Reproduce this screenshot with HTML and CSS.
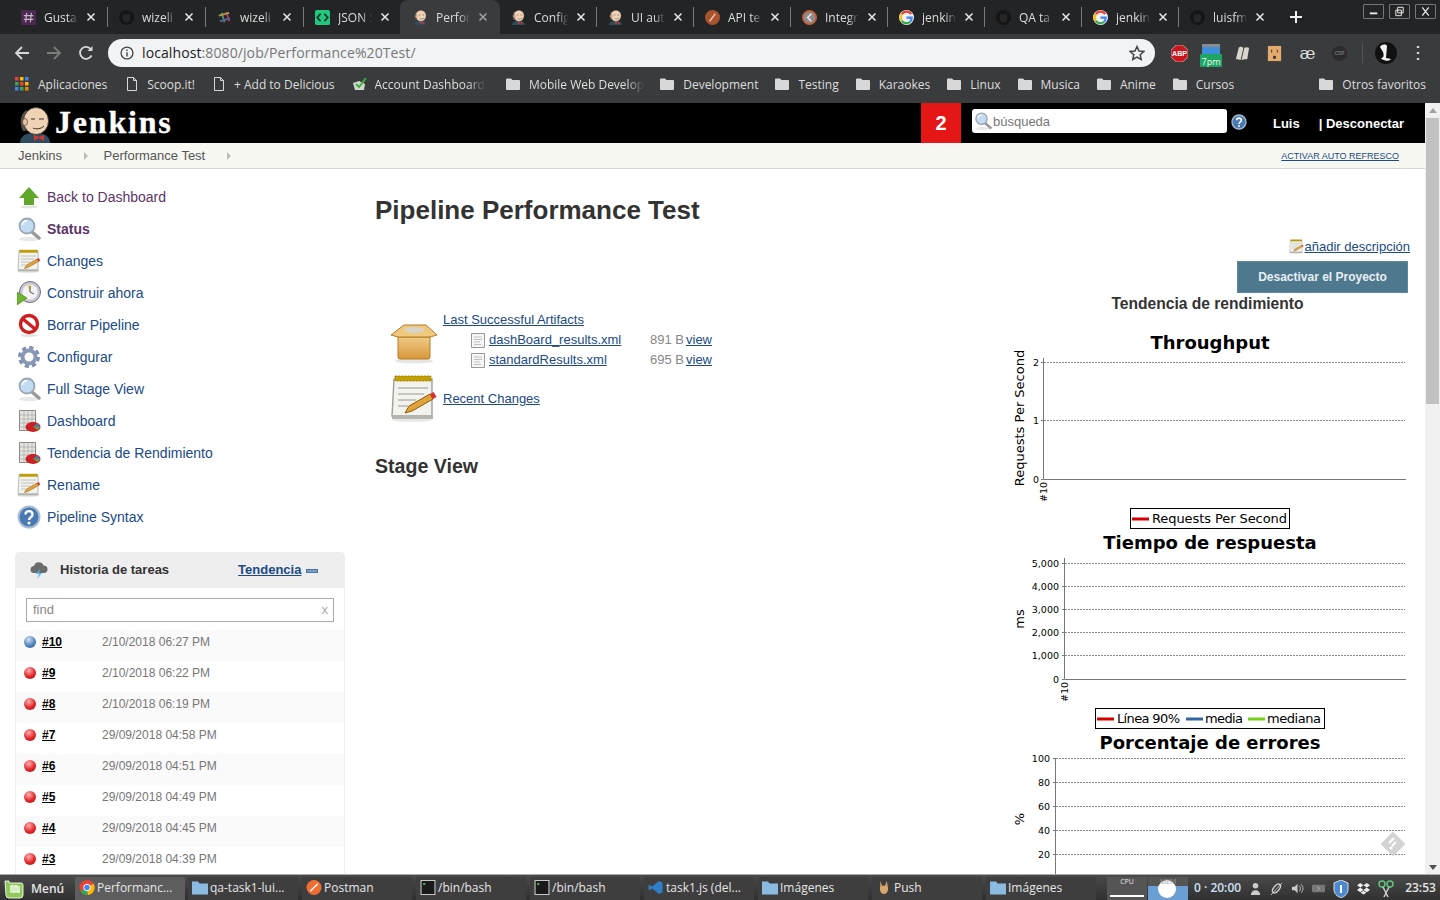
FILE: index.html
```html
<!DOCTYPE html>
<html lang="en">
<head>
<meta charset="UTF-8">
<meta name="viewport" content="width=device-width, initial-scale=1.0">
<title>Performance Test [Jenkins]</title>
<link rel="stylesheet" href="styles.css">
</head>
<body>

<svg class="defs" width="0" height="0">
    <defs>
        <linearGradient id="g-box" x1="0" y1="0" x2="0" y2="1">
            <stop offset="0" stop-color="#efcb86"/>
            <stop offset="1" stop-color="#d9963a"/>
        </linearGradient>
        <symbol id="i-jenkins" viewBox="0 0 32 36">
            <path d="M1 36c0-6 4-10 15-10s15 4 15 10z" fill="#2f4b5f"/>
            <path d="M4 24C0 16 1 6 8 3l3 20z" fill="#55524e"/>
            <ellipse cx="17" cy="14" rx="12.500" ry="13.500" fill="#f0d3b4" stroke="#3a2f2a" stroke-width=".8"/>
            <ellipse cx="6" cy="15" rx="2.500" ry="3.500" fill="#e8c4a2" stroke="#3a2f2a" stroke-width=".6"/>
            <path d="M12 12h4M20 12h5M14 21c3 1.500 8 1 11-2" stroke="#3a2f2a" fill="none"/>
            <path d="M15 28l5 2 5-2v6l-5-3-5 3z" fill="#d33833"/>
        </symbol>
        <symbol id="i-github" viewBox="0 0 16 16">
            <circle cx="8" cy="8" r="8" fill="#151515"/>
            <path d="M5 13V11C3 10 4 5 5 4c1 0 2 1 3 1s2-1 3-1c1 1 2 6 0 7v2z" fill="#262626"/>
        </symbol>
        <symbol id="i-google" viewBox="0 0 16 16">
            <circle cx="8" cy="8" r="8" fill="#f1f1f1"/>
            <path d="M13 4.500A6 6 0 0 0 3 4.500" stroke="#ea4335" stroke-width="2.400" fill="none"/>
            <path d="M3 4.500a6 6 0 0 0 0 7" stroke="#fbbc05" stroke-width="2.400" fill="none"/>
            <path d="M3 11.500a6 6 0 0 0 9 1" stroke="#34a853" stroke-width="2.400" fill="none"/>
            <path d="M8 8h5.500a6 6 0 0 1-1.500 4.500" stroke="#4285f4" stroke-width="2.400" fill="none"/>
        </symbol>
        <symbol id="i-folder" viewBox="0 0 14 12">
            <path d="M0 1.500A1 1 0 0 1 1 .5h4l1.500 1.500H13a1 1 0 0 1 1 1V11a1 1 0 0 1-1 1H1a1 1 0 0 1-1-1z" fill="#d8d8d8"/>
        </symbol>
        <symbol id="i-doc" viewBox="0 0 10 14">
            <path d="M.5.5h6l3 3v10h-9z M6.500.5v3h3" fill="none" stroke="#d8d8d8"/>
        </symbol>
        <symbol id="i-close" viewBox="0 0 10 10">
            <path d="M1.500 1.500l7 7M8.500 1.500l-7 7" stroke="#e8e8e8" stroke-width="1.500"/>
        </symbol>
        <symbol id="i-magnifier" viewBox="0 0 24 24">
            <ellipse cx="12" cy="22" rx="10" ry="2" fill="#e8e8e8"/>
            <path d="M15 15l7 6" stroke="#9a9a9a" stroke-width="3.500" stroke-linecap="round"/>
            <circle cx="10" cy="9" r="7.500" fill="#c4dcf2" stroke="#9aa6b2" stroke-width="1.800"/>
            <path d="M5 8a5 5 0 0 1 5-4" stroke="#fff" stroke-width="1.500" fill="none"/>
        </symbol>
        <symbol id="i-notepad" viewBox="0 0 24 24">
            <ellipse cx="11" cy="23" rx="10" ry="1" fill="#e8e8e8"/>
            <path d="M2 2.500h19v18.500H1z" fill="#f2f2ee" stroke="#a0a09a" stroke-width=".7"/>
            <path d="M2.500 1h18v2.500h-18z" fill="#c4a000" stroke="#8f7500" stroke-width=".4" stroke-dasharray="1 .6"/>
            <path d="M1 20.500h20.500V22.500H1z" fill="#b4b4b0"/>
            <path d="M4 7h15M4 10h13M4 13h9M4 16h5" stroke="#b8b8b2" stroke-width=".8"/>
            <path d="M7.500 19.500l2-3.500 10.500-6 1.500 2.500-10.500 6z" fill="#e2a33f" stroke="#8f5902" stroke-width=".5"/>
            <path d="M20 10l1.500 2.500 1.800-1-1.500-2.500z" fill="#d9342b"/>
        </symbol>
        <symbol id="i-build" viewBox="0 0 24 24">
            <circle cx="13" cy="11" r="10.500" fill="#c8c8d4" stroke="#6f6f80"/>
            <circle cx="13" cy="11" r="7.500" fill="#f4f4f4"/>
            <path d="M13 11L9 4 15 4z" fill="#eadb9a"/>
            <path d="M13 5v6l4 2" stroke="#555" fill="none"/>
            <path d="M0 11l10 6-10 7z" fill="#6cb72c" stroke="#3f7f10" stroke-width=".6"/>
        </symbol>
        <symbol id="i-delete" viewBox="0 0 24 24">
            <ellipse cx="12" cy="22.500" rx="9" ry="1.500" fill="#e2e2e2"/>
            <circle cx="12" cy="11" r="8.500" fill="#fff" stroke="#cc1f1f" stroke-width="3.400"/>
            <path d="M6 6l12 10" stroke="#cc1f1f" stroke-width="3.400"/>
        </symbol>
        <symbol id="i-gear" viewBox="0 0 24 24">
            <circle cx="12" cy="12" r="9" fill="none" stroke="#7f8fb0" stroke-width="4" stroke-dasharray="4 3.070"/>
            <circle cx="12" cy="12" r="6.500" fill="none" stroke="#8a98b8" stroke-width="4"/>
            <circle cx="12" cy="12" r="3.500" fill="#fff"/>
        </symbol>
        <symbol id="i-dash" viewBox="0 0 24 24">
            <path d="M2.500 1.500h16v20h-16z" fill="#e4e4e0" stroke="#8a8a86"/>
            <path d="M3 6h15M3 10h15M3 14h15M3 18h15M7 2v19M11 2v19M15 2v19" stroke="#a8a8a4" stroke-width=".7"/>
            <ellipse cx="16" cy="18" rx="7.500" ry="5" fill="#cc1f1f"/>
            <path d="M16 18l4-4 3 4z" fill="#4a7db0"/>
            <path d="M16 18h7l-2 3z" fill="#6aa53a"/>
        </symbol>
        <symbol id="i-help" viewBox="0 0 24 24">
            <circle cx="12" cy="12" r="10.500" fill="#4a79b2" stroke="#a9bdd6" stroke-width="2"/>
            <path d="M8.500 9.500C8.500 5 15.500 5 15.500 9.500c0 3-3.500 2.500-3.500 5.500" fill="none" stroke="#fff" stroke-width="2.400"/>
            <circle cx="12" cy="18" r="1.500" fill="#fff"/>
        </symbol>
        <symbol id="i-file" viewBox="0 0 14 15">
            <path d="M.5.5h13v14H.5z" fill="#f6f6f6" stroke="#999"/>
            <path d="M3 4h8M3 6.500h8M3 9h6M3 11.500h7" stroke="#c0c0c0"/>
        </symbol>
        <symbol id="i-term" viewBox="0 0 14 14">
            <path d="M.5.5h13v13H.5z" fill="#1a1a1a" stroke="#c8c8c8"/>
            <path d="M2.500 3h2v1.500h-2z" fill="#5fd35f"/>
        </symbol>
        <symbol id="i-bluefolder" viewBox="0 0 16 14">
            <path d="M0 1h6l1.500 2H16v11H0z" fill="#8cbbe2"/>
        </symbol>
    </defs>
</svg>

<div class="tabstrip">
    <div class="tab tab-sep">
        <svg class="tab-icon" viewBox="0 0 16 16"><rect width="16" height="16" fill="#4a2a4e"/><path d="M6 3L5 13M11 3l-1 10M3 6h10M3 10h10" stroke="#c9b9cc" stroke-width="1.200"/></svg>
        <span class="tab-title">Gusta</span>
        <svg class="tab-close"><use href="#i-close"/></svg>
    </div>
    <div class="tab tab-sep">
        <svg class="tab-icon"><use href="#i-github"/></svg>
        <span class="tab-title">wizeli</span>
        <svg class="tab-close"><use href="#i-close"/></svg>
    </div>
    <div class="tab tab-sep">
        <svg class="tab-icon" viewBox="0 0 16 16"><path d="M5 3l3 10" stroke="#3f9a6e" stroke-width="2"/><path d="M10 2l3 10" stroke="#b8336a" stroke-width="2"/><path d="M2 6l11-3" stroke="#b8963a" stroke-width="2"/><path d="M3 12l11-3" stroke="#5a5f8a" stroke-width="2"/></svg>
        <span class="tab-title">wizeli</span>
        <svg class="tab-close"><use href="#i-close"/></svg>
    </div>
    <div class="tab">
        <svg class="tab-icon" viewBox="0 0 16 16"><rect width="16" height="16" rx="2" fill="#1fc77f"/><path d="M6 4L2.500 8 6 12M10 4l3.500 4-3.500 4" fill="none" stroke="#12352a" stroke-width="2"/></svg>
        <span class="tab-title">JSON S</span>
        <svg class="tab-close"><use href="#i-close"/></svg>
    </div>
    <div class="tab tab-active">
        <svg class="tab-icon"><use href="#i-jenkins"/></svg>
        <span class="tab-title">Perfor</span>
        <svg class="tab-close"><use href="#i-close"/></svg>
    </div>
    <div class="tab tab-sep">
        <svg class="tab-icon"><use href="#i-jenkins"/></svg>
        <span class="tab-title">Config</span>
        <svg class="tab-close"><use href="#i-close"/></svg>
    </div>
    <div class="tab tab-sep">
        <svg class="tab-icon"><use href="#i-jenkins"/></svg>
        <span class="tab-title">UI aut</span>
        <svg class="tab-close"><use href="#i-close"/></svg>
    </div>
    <div class="tab tab-sep">
        <svg class="tab-icon" viewBox="0 0 16 16"><circle cx="8" cy="8" r="8" fill="#a8532c"/><path d="M5 12l6-8" stroke="#e6c9b8" stroke-width="1.500"/></svg>
        <span class="tab-title">API te</span>
        <svg class="tab-close"><use href="#i-close"/></svg>
    </div>
    <div class="tab tab-sep">
        <svg class="tab-icon" viewBox="0 0 16 16"><circle cx="8" cy="8" r="7" fill="#8d8d8d" stroke="#c2603a" stroke-width="2"/><path d="M10 4L6 8l4 4" fill="none" stroke="#eee" stroke-width="1.500"/></svg>
        <span class="tab-title">Integr</span>
        <svg class="tab-close"><use href="#i-close"/></svg>
    </div>
    <div class="tab tab-sep">
        <svg class="tab-icon"><use href="#i-google"/></svg>
        <span class="tab-title">jenkin</span>
        <svg class="tab-close"><use href="#i-close"/></svg>
    </div>
    <div class="tab tab-sep">
        <svg class="tab-icon"><use href="#i-github"/></svg>
        <span class="tab-title">QA ta</span>
        <svg class="tab-close"><use href="#i-close"/></svg>
    </div>
    <div class="tab tab-sep">
        <svg class="tab-icon"><use href="#i-google"/></svg>
        <span class="tab-title">jenkin</span>
        <svg class="tab-close"><use href="#i-close"/></svg>
    </div>
    <div class="tab">
        <svg class="tab-icon"><use href="#i-github"/></svg>
        <span class="tab-title">luisfm</span>
        <svg class="tab-close"><use href="#i-close"/></svg>
    </div>
    <svg class="new-tab" viewBox="0 0 12 12"><path d="M6 0v12M0 6h12" stroke="#f0f0f0" stroke-width="2"/></svg>
    <div class="window-controls">
        <span class="win-btn"><svg viewBox="0 0 20 14"><path d="M6 9h8" stroke="#eee" stroke-width="2"/></svg></span>
        <span class="win-btn"><svg viewBox="0 0 20 14"><path d="M8 2.500h6v6h-6zM6 5.500h6v6H6z" fill="#2a2a2a" stroke="#eee"/></svg></span>
        <span class="win-btn"><svg viewBox="0 0 20 14"><path d="M6.500 2.500l7 9M13.500 2.500l-7 9" stroke="#eee" stroke-width="1.300"/></svg></span>
    </div>
</div>

<div class="toolbar">
    <svg class="nav-icon" viewBox="0 0 16 16"><path d="M15 8H2M8 2L2 8l6 6" fill="none" stroke="#d8d8d8" stroke-width="1.800"/></svg>
    <svg class="nav-icon" viewBox="0 0 16 16"><path d="M1 8h13M8 2l6 6-6 6" fill="none" stroke="#7b7b7b" stroke-width="1.800"/></svg>
    <svg class="nav-icon" viewBox="0 0 16 16"><path d="M13.500 10.500A6 6 0 1 1 13 4.500" fill="none" stroke="#d8d8d8" stroke-width="1.800"/><path d="M14.500 1v5h-5z" fill="#d8d8d8"/></svg>
    <div class="omnibox">
        <svg class="omni-info" viewBox="0 0 16 16"><circle cx="8" cy="8" r="6.800" fill="none" stroke="#444" stroke-width="1.500"/><path d="M8 7v5M8 4v1.800" stroke="#444" stroke-width="1.600"/></svg>
        <span class="omni-url">localhost<span class="omni-path">:8080/job/Performance%20Test/</span></span>
        <svg class="omni-star" viewBox="0 0 16 16"><path d="M8 1.500l2 4.500 4.800.5-3.600 3.200 1 4.800L8 12.100 3.800 14.500l1-4.800L1.200 6.500 6 6z" fill="none" stroke="#444" stroke-width="1.500"/></svg>
    </div>
    <div class="extensions">
        <svg class="ext-icon" viewBox="0 0 18 18"><path d="M5.500 0h7L18 5.500v7L12.500 18h-7L0 12.500v-7z" fill="#c9161d" stroke="#eee" stroke-width=".6"/><text x="9" y="11.500" class="ext-abp" text-anchor="middle">ABP</text></svg>
        <svg class="ext-cal" viewBox="0 0 22 24"><rect x="2" y="1" width="18" height="10" fill="#3f8edc"/><rect x="2" y="1" width="18" height="3" fill="#8a8a8a"/><rect y="11" width="22" height="13" rx="1" fill="#1fa463"/><text x="11" y="21.500" class="ext-seven" text-anchor="middle">7pm</text></svg>
        <svg class="ext-icon ext-book" viewBox="0 0 18 18"><path d="M2 15L5 3c2-2 3-1 5 0L7 16c-2-1-3-1-5-1zM8 16l3-13c2-1 3-1 5 0l-2 12c-2 0-4 0-6 1z" fill="#d9d7cd"/></svg>
        <svg class="ext-icon ext-outlet" viewBox="0 0 18 18"><rect x="2" y="1" width="14" height="16" fill="#e5ab6e"/><path d="M6 5v3M12 5v3M8 12h2v2H8z" stroke="#333" fill="#333"/></svg>
        <span class="ext-text">æ</span>
        <svg class="ext-icon ext-csp-icon" viewBox="0 0 18 18"><circle cx="9" cy="9" r="8" fill="#2b2b2b"/><text x="9" y="11" class="ext-csp" text-anchor="middle">CSP</text></svg>
        <span class="ext-sep"></span>
        <svg class="ext-avatar" viewBox="0 0 22 22"><circle cx="11" cy="11" r="11" fill="#111"/><path d="M5 5c2-3 6-3 7-1l-1 12 5 1c-2 3-8 2-10-1 3 0 3-3 2-6z" fill="#f4f4f4"/></svg>
        <svg class="ext-menu" viewBox="0 0 4 16"><path d="M2 1v2M2 7v2M2 13v2" stroke="#d8d8d8" stroke-width="2.400"/></svg>
    </div>
</div>

<div class="bookmarks">
    <span class="bm bm-apps">
        <svg class="bm-grid" viewBox="0 0 14 14"><path d="M0 0h3.500v3.500H0z" fill="#ea4335"/><path d="M5 0h3.500v3.500H5z" fill="#fbbc05"/><path d="M10 0h3.500v3.500H10z" fill="#4285f4"/><path d="M0 5h3.500v3.500H0z" fill="#34a853"/><path d="M5 5h3.500v3.500H5z" fill="#ea4335"/><path d="M10 5h3.500v3.500H10z" fill="#fbbc05"/><path d="M0 10h3.500v3.500H0z" fill="#4285f4"/><path d="M5 10h3.500v3.500H5z" fill="#34a853"/><path d="M10 10h3.500v3.500H10z" fill="#ea8600"/></svg>
        Aplicaciones
    </span>
    <span class="bm"><svg class="bm-doc"><use href="#i-doc"/></svg>Scoop.it!</span>
    <span class="bm bm-delicious"><svg class="bm-doc"><use href="#i-doc"/></svg>+ Add to Delicious</span>
    <span class="bm"><svg class="bm-check" viewBox="0 0 15 14"><path d="M1 6l6-2 6 3-1 6H3z" fill="#cfd8cf"/><path d="M4 7l3 3 7-9" fill="none" stroke="#3fae3f" stroke-width="2"/></svg><span class="bm-fade bm-account">Account Dashboard</span></span>
    <span class="bm"><svg class="bm-folder"><use href="#i-folder"/></svg><span class="bm-fade bm-mobile">Mobile Web Develop</span></span>
    <span class="bm"><svg class="bm-folder"><use href="#i-folder"/></svg>Development</span>
    <span class="bm"><svg class="bm-folder"><use href="#i-folder"/></svg>Testing</span>
    <span class="bm"><svg class="bm-folder"><use href="#i-folder"/></svg>Karaokes</span>
    <span class="bm"><svg class="bm-folder"><use href="#i-folder"/></svg>Linux</span>
    <span class="bm"><svg class="bm-folder"><use href="#i-folder"/></svg>Musica</span>
    <span class="bm"><svg class="bm-folder"><use href="#i-folder"/></svg>Anime</span>
    <span class="bm"><svg class="bm-folder"><use href="#i-folder"/></svg>Cursos</span>
    <span class="bm bm-other"><svg class="bm-folder"><use href="#i-folder"/></svg>Otros favoritos</span>
</div>

<div class="viewport">
    <div class="page">
        <header class="jenkins-header">
            <svg class="logo-head"><use href="#i-jenkins"/></svg>
            <span class="logo-text">Jenkins</span>
            <span class="notif">2</span>
            <div class="search-box">
                <svg class="search-icon"><use href="#i-magnifier"/></svg>
                <span>búsqueda</span>
            </div>
            <svg class="search-help"><use href="#i-help"/></svg>
            <a class="user-link">Luis</a>
            <a class="logout-link">| Desconectar</a>
        </header>

        <div class="breadcrumbs">
            <span class="crumb">Jenkins</span>
            <span class="crumb-arrow"></span>
            <span class="crumb">Performance Test</span>
            <span class="crumb-arrow"></span>
            <a class="auto-refresh">ACTIVAR AUTO REFRESCO</a>
        </div>

        <div class="content">
            <aside class="sidebar">
                <ul class="tasks">
                    <li class="visited"><svg viewBox="0 0 24 24"><path d="M12 2L2 13h5v7h10v-7h5z" fill="#5fa82a"/><ellipse cx="12" cy="22" rx="9" ry="1.500" fill="#e4e4e4"/></svg>Back to Dashboard</li>
                    <li class="visited current"><svg><use href="#i-magnifier"/></svg>Status</li>
                    <li><svg><use href="#i-notepad"/></svg>Changes</li>
                    <li><svg><use href="#i-build"/></svg>Construir ahora</li>
                    <li><svg><use href="#i-delete"/></svg>Borrar Pipeline</li>
                    <li><svg><use href="#i-gear"/></svg>Configurar</li>
                    <li><svg><use href="#i-magnifier"/></svg>Full Stage View</li>
                    <li><svg><use href="#i-dash"/></svg>Dashboard</li>
                    <li><svg><use href="#i-dash"/></svg>Tendencia de Rendimiento</li>
                    <li><svg><use href="#i-notepad"/></svg>Rename</li>
                    <li><svg><use href="#i-help"/></svg>Pipeline Syntax</li>
                </ul>

                <div class="history">
                    <div class="history-head">
                        <svg class="history-cloud" viewBox="0 0 18 18"><path d="M4 12a3.500 3.500 0 0 1 0-7 5 5 0 0 1 9.500-.5A3.500 3.500 0 0 1 14 12z" fill="#6b6b6b"/><path d="M10 8l-4 5h3l-2 5 5-6H9z" fill="#53b9ee"/></svg>
                        <span class="history-title">Historia de tareas</span>
                        <a class="history-trend">Tendencia</a>
                        <span class="history-dash"></span>
                    </div>
                    <div class="history-find">
                        <div class="find-input"><span>find</span><span class="find-x">x</span></div>
                    </div>
                    <div class="build-row"><span class="ball ball-blue"></span><a>#10</a><span class="build-date">2/10/2018 06:27 PM</span></div>
                    <div class="build-row"><span class="ball"></span><a>#9</a><span class="build-date">2/10/2018 06:22 PM</span></div>
                    <div class="build-row"><span class="ball"></span><a>#8</a><span class="build-date">2/10/2018 06:19 PM</span></div>
                    <div class="build-row"><span class="ball"></span><a>#7</a><span class="build-date">29/09/2018 04:58 PM</span></div>
                    <div class="build-row"><span class="ball"></span><a>#6</a><span class="build-date">29/09/2018 04:51 PM</span></div>
                    <div class="build-row"><span class="ball"></span><a>#5</a><span class="build-date">29/09/2018 04:49 PM</span></div>
                    <div class="build-row"><span class="ball"></span><a>#4</a><span class="build-date">29/09/2018 04:45 PM</span></div>
                    <div class="build-row"><span class="ball"></span><a>#3</a><span class="build-date">29/09/2018 04:39 PM</span></div>
                </div>
            </aside>

            <main class="job-main">
                <h1>Pipeline Performance Test</h1>
                <div class="summary">
                    <svg class="summary-icon" viewBox="0 0 48 48">
                        <ellipse cx="24" cy="44" rx="19" ry="2.500" fill="#e6e6e6"/>
                        <path d="M8 20h32v20a2 2 0 0 1-2 2H10a2 2 0 0 1-2-2z" fill="url(#g-box)" stroke="#b47a22"/>
                        <path d="M8 20L1 18 14 8h22l11 10-7 2z" fill="#f0c980" stroke="#b47a22"/>
                        <ellipse cx="24" cy="13" rx="10" ry="3" fill="#d8d4c8"/>
                    </svg>
                    <div class="artifacts">
                        <a class="link">Last Successful Artifacts</a>
                        <div class="artifact"><svg><use href="#i-file"/></svg><a class="link artifact-name">dashBoard_results.xml</a><span class="artifact-size">891 B</span><a class="link">view</a></div>
                        <div class="artifact"><svg><use href="#i-file"/></svg><a class="link artifact-name">standardResults.xml</a><span class="artifact-size">695 B</span><a class="link">view</a></div>
                    </div>
                </div>
                <div class="summary summary-changes">
                    <svg class="summary-icon"><use href="#i-notepad"/></svg>
                    <a class="link">Recent Changes</a>
                </div>
                <h2>Stage View</h2>
            </main>

            <section class="trend">
                <a class="add-desc"><svg><use href="#i-notepad"/></svg><span class="link">añadir descripción</span></a>
                <div class="disable-btn">Desactivar el Proyecto</div>
                <h3>Tendencia de rendimiento</h3>

                <svg class="chart" viewBox="0 0 400 200">
                    <text class="chart-title" x="200" y="19" text-anchor="middle">Throughput</text>
                    <path class="chart-grid" d="M34 32.500h361M34 90.500h361"/>
                    <path class="chart-axis" d="M33.500 28v121.500H396M31 32.500h2M31 90.500h2M31 149.500h2"/>
                    <text class="chart-tick" x="29" y="36" text-anchor="end">2</text>
                    <text class="chart-tick" x="29" y="94" text-anchor="end">1</text>
                    <text class="chart-tick" x="29" y="153" text-anchor="end">0</text>
                    <text class="chart-label" transform="translate(14 88) rotate(-90)" text-anchor="middle">Requests Per Second</text>
                    <text class="chart-build" transform="translate(37 172) rotate(-90)">#10</text>
                    <rect class="chart-legend" x="120.500" y="178.500" width="159" height="20"/>
                    <path d="M122 189h17" stroke="#d40000" stroke-width="3"/>
                    <text class="chart-legend-text" x="142" y="193" textLength="135">Requests Per Second</text>
                </svg>

                <svg class="chart" viewBox="0 0 400 200">
                    <text class="chart-title" x="200" y="19" text-anchor="middle">Tiempo de respuesta</text>
                    <path class="chart-grid" d="M55 33.500h340M55 56.500h340M55 79.500h340M55 102.500h340M55 125.500h340"/>
                    <path class="chart-axis" d="M54.500 28v121.500H396M52 33.500h2M52 56.500h2M52 79.500h2M52 102.500h2M52 125.500h2M52 149.500h2"/>
                    <text class="chart-tick" x="49" y="37" text-anchor="end">5,000</text>
                    <text class="chart-tick" x="49" y="60" text-anchor="end">4,000</text>
                    <text class="chart-tick" x="49" y="83" text-anchor="end">3,000</text>
                    <text class="chart-tick" x="49" y="106" text-anchor="end">2,000</text>
                    <text class="chart-tick" x="49" y="129" text-anchor="end">1,000</text>
                    <text class="chart-tick" x="49" y="153" text-anchor="end">0</text>
                    <text class="chart-label" transform="translate(14 89) rotate(-90)" text-anchor="middle">ms</text>
                    <text class="chart-build" transform="translate(58 172) rotate(-90)">#10</text>
                    <rect class="chart-legend" x="85.500" y="178.500" width="229" height="20"/>
                    <path d="M87 189h17" stroke="#d40000" stroke-width="3"/>
                    <text class="chart-legend-text" x="107" y="193" textLength="63">Línea 90%</text>
                    <path d="M176 189h17" stroke="#3465a4" stroke-width="3"/>
                    <text class="chart-legend-text" x="195" y="193" textLength="38">media</text>
                    <path d="M238 189h17" stroke="#73d216" stroke-width="3"/>
                    <text class="chart-legend-text" x="257" y="193" textLength="54">mediana</text>
                </svg>

                <svg class="chart" viewBox="0 0 400 200">
                    <text class="chart-title" x="200" y="19" text-anchor="middle">Porcentaje de errores</text>
                    <path class="chart-grid" d="M46 28.500h349M46 52.500h349M46 76.500h349M46 100.500h349M46 124.500h349"/>
                    <path class="chart-axis" d="M45.500 28v140M43 28.500h2M43 52.500h2M43 76.500h2M43 100.500h2M43 124.500h2"/>
                    <text class="chart-tick" x="40" y="32" text-anchor="end">100</text>
                    <text class="chart-tick" x="40" y="56" text-anchor="end">80</text>
                    <text class="chart-tick" x="40" y="80" text-anchor="end">60</text>
                    <text class="chart-tick" x="40" y="104" text-anchor="end">40</text>
                    <text class="chart-tick" x="40" y="128" text-anchor="end">20</text>
                    <text class="chart-label" transform="translate(14 89) rotate(-90)" text-anchor="middle">%</text>
                </svg>

                <svg class="feed-badge" viewBox="0 0 24 24">
                    <path d="M12 1l11 11-11 11L1 12z" fill="#d4d4d4" stroke="#d4d4d4" stroke-width="2" stroke-linejoin="round"/>
                    <path d="M8 11l5-5M11 14l4-4" stroke="#fff" stroke-width="2"/>
                    <circle cx="10" cy="16" r="1.600" fill="#fff"/>
                </svg>
            </section>
        </div>
    </div>
    <div class="scrollbar">
        <span class="scroll-up"></span>
        <span class="scroll-thumb"></span>
        <span class="scroll-down"></span>
    </div>
</div>

<footer class="taskbar">
    <div class="menu-btn">
        <svg viewBox="0 0 20 20"><path d="M1 2h4v2h12a2 2 0 0 1 2 2v10a3 3 0 0 1-3 3H5a3 3 0 0 1-3-3z" fill="#8fc95a" stroke="#e8f4dc"/><path d="M7 14V7h2v6h2V7h2v6h2V7" fill="none" stroke="#fff" stroke-width="1.300"/></svg>
        <span>Menú</span>
    </div>
    <div class="window window-active">
        <svg viewBox="0 0 16 16"><circle cx="8" cy="8" r="8" fill="#ea4335"/><path d="M8 8L1 12a8 8 0 0 0 8 4z" fill="#34a853"/><path d="M8 8l7-4a8 8 0 0 1-6 12z" fill="#fbbc05"/><circle cx="8" cy="8" r="3.500" fill="#4285f4" stroke="#fff"/></svg>
        <span>Performanc...</span>
    </div>
    <div class="window"><svg><use href="#i-bluefolder"/></svg><span>qa-task1-lui...</span></div>
    <div class="window">
        <svg viewBox="0 0 16 16"><circle cx="8" cy="8" r="8" fill="#ef6c33"/><path d="M4 12l8-8" stroke="#fff" stroke-width="1.500"/></svg>
        <span>Postman</span>
    </div>
    <div class="window"><svg><use href="#i-term"/></svg><span>/bin/bash</span></div>
    <div class="window"><svg><use href="#i-term"/></svg><span>/bin/bash</span></div>
    <div class="window">
        <svg viewBox="0 0 16 16"><path d="M11 1l4 2v10l-4 2-7-6-3 2-1-1v-4l1-1 3 2z" fill="#2f7fc7"/></svg>
        <span>task1.js (del...</span>
    </div>
    <div class="window"><svg><use href="#i-bluefolder"/></svg><span>Imágenes</span></div>
    <div class="window">
        <svg viewBox="0 0 16 16"><path d="M4 1l2 5h3l2-5 1 6c1 3 0 8-4 8S3 10 4 7z" fill="#d9a86c"/></svg>
        <span>Push</span>
    </div>
    <div class="window"><svg><use href="#i-bluefolder"/></svg><span>Imágenes</span></div>

    <div class="applet applet-cpu"><span>CPU</span><i></i></div>
    <div class="applet applet-mem"><span>MEM</span><b></b></div>
    <span class="tray-stat">0 · 20:00</span>
    <div class="tray">
        <svg viewBox="0 0 14 14"><circle cx="7" cy="4" r="3" fill="#ccc"/><path d="M2 14c0-7 10-7 10 0z" fill="#ccc"/></svg>
        <svg viewBox="0 0 14 14"><ellipse cx="7" cy="7" rx="3" ry="5.500" transform="rotate(40 7 7)" fill="none" stroke="#ccc" stroke-width="1.500"/><path d="M1 14L13 1" stroke="#ccc"/></svg>
        <svg viewBox="0 0 14 14"><path d="M1 5h3l3-3v10L4 9H1z" fill="#ccc"/><path d="M9 4c1.500 2 1.500 4 0 6M11 2.500c2.500 3 2.500 6 0 9" fill="none" stroke="#ccc"/></svg>
        <svg viewBox="0 0 14 14"><rect y="3" width="14" height="8" rx="1" fill="#777"/><path d="M6 5l2 2-2 2" stroke="#bbb" fill="none"/></svg>
        <svg class="tray-big" viewBox="0 0 16 18"><path d="M8 0l7 3v6c0 5-3 7-7 9-4-2-7-4-7-9V3z" fill="#4a89d0" stroke="#ddd"/><path d="M8 5v8" stroke="#fff" stroke-width="2"/></svg>
        <svg viewBox="0 0 14 14"><path d="M3.500 1L7 3.500 3.500 6 0 3.500zM10.500 1L14 3.500 10.500 6 7 3.500zM3.500 6L7 8.500 3.500 11 0 8.500zM10.500 6L14 8.500 10.500 11 7 8.500zM7 9.500l3 2-3 2-3-2z" fill="#eee"/></svg>
        <svg class="tray-big" viewBox="0 0 16 18"><circle cx="4" cy="4" r="3" fill="none" stroke="#5ec47a" stroke-width="1.500"/><circle cx="12" cy="4" r="3" fill="none" stroke="#5ec47a" stroke-width="1.500"/><path d="M5 7l5 10M11 7L6 17" stroke="#ccc" stroke-width="1.500"/></svg>
    </div>
    <span class="clock">23:53</span>
</footer>

</body>
</html>
```

FILE: styles.css
```css
* {
    box-sizing: border-box;
}
html, body {
    height: 100%;
}
body {
    margin: 0;
    height: 900px;
    overflow: hidden;
    display: flex;
    flex-direction: column;
    font-family: "Liberation Sans", Arial, sans-serif;
    background-color: #fff;
}
.defs {
    position: absolute;
}
a {
    cursor: pointer;
}

/* browser tabs */
.tabstrip {
    height: 34px;
    flex: none;
    display: flex;
    padding-left: 10px;
    background-color: #232425;
    font-family: "Open Sans", sans-serif;
    font-size: 12px;
    color: #dcdcdc;
}
.tab {
    width: 98px;
    height: 34px;
    flex: none;
    display: flex;
    align-items: center;
    padding-left: 11px;
    position: relative;
}
.tab:nth-child(n+6) {
    width: 97px;
}
.tab-sep::after {
    content: "";
    position: absolute;
    right: 0;
    top: 7px;
    height: 20px;
    width: 1px;
    background-color: #7a7a7a;
}
.tab-active {
    width: 100px;
    margin-left: -2px;
    padding-left: 13px;
    background-color: #393b3c;
    border-radius: 8px 8px 0 0;
}
.tab-active .tab-close {
    opacity: .6;
}
.tab-icon {
    width: 15px;
    height: 15px;
    flex: none;
}
.tab-title {
    width: 36px;
    margin-left: 8px;
    white-space: nowrap;
    -webkit-mask-image: linear-gradient(to right, #000 65%, transparent 95%);
    mask-image: linear-gradient(to right, #000 65%, transparent 95%);
}
.tab-close {
    width: 10px;
    height: 10px;
    margin-left: 6px;
    flex: none;
}
.new-tab {
    width: 12px;
    height: 12px;
    margin: 11px 0 0 14px;
}
.window-controls {
    margin-left: auto;
    padding: 4px 4px 0 0;
    display: flex;
    gap: 5px;
}
.win-btn {
    width: 21px;
    height: 15px;
    border: 1px solid #777;
    border-radius: 1px;
    display: flex;
}
.win-btn svg {
    width: 100%;
}

/* address bar */
.toolbar {
    height: 33px;
    flex: none;
    display: flex;
    align-items: center;
    padding: 5px 0 0 14px;
    background-color: #393b3c;
}
.nav-icon {
    width: 16px;
    height: 16px;
    margin-right: 16px;
}
.omnibox {
    width: 1047px;
    height: 28px;
    margin-left: -2px;
    display: flex;
    align-items: center;
    padding: 0 10px 0 12px;
    background-color: #f1f3f4;
    border-radius: 14px;
    font-family: "Open Sans", sans-serif;
    font-size: 14px;
    letter-spacing: .1px;
    color: #222;
}
.omni-info {
    width: 14px;
    height: 14px;
    margin-right: 8px;
}
.omni-url {
    padding-bottom: 2px;
}
.omni-path {
    color: #777;
}
.omni-star {
    width: 16px;
    height: 16px;
    margin-left: auto;
}
.extensions {
    display: flex;
    align-items: center;
    margin-left: 16px;
    gap: 14px;
}
.ext-icon {
    width: 17px;
    height: 17px;
    flex: none;
}
.ext-abp {
    font: bold 7.500px "Liberation Sans", sans-serif;
    fill: #fff;
}
.ext-cal {
    width: 22px;
    height: 24px;
    margin: 3px 0 0 -2px;
    flex: none;
}
.ext-seven {
    font: 9px "Open Sans", sans-serif;
    fill: #eafff0;
}
.ext-book {
    margin-left: -2px;
}
.ext-outlet {
    margin-left: 1px;
}
.ext-csp-icon {
    margin-left: 1px;
}
.ext-csp {
    font: bold 5px "Liberation Sans", sans-serif;
    fill: #777;
}
.ext-text {
    width: 17px;
    margin-left: 2px;
    font: 17px "DejaVu Serif", serif;
    line-height: 17px;
    color: #ddd;
    text-align: center;
}
.ext-sep {
    width: 1px;
    height: 20px;
    background-color: #555;
}
.ext-avatar {
    width: 22px;
    height: 22px;
    flex: none;
    margin-left: -2px;
}
.ext-menu {
    width: 4px;
    height: 16px;
    margin-left: 5px;
    flex: none;
}

/* bookmarks */
.bookmarks {
    height: 36px;
    flex: none;
    display: flex;
    align-items: center;
    gap: 17px;
    padding: 0 14px 2px 15px;
    background-color: #393b3c;
    font-family: "Open Sans", sans-serif;
    font-size: 12px;
    color: #dedede;
    white-space: nowrap;
}
.bm {
    display: flex;
    align-items: center;
}
.bm-grid {
    width: 14px;
    height: 14px;
    margin-right: 9px;
}
.bm-apps {
    margin-right: 3px;
}
.bm-doc {
    width: 10px;
    height: 14px;
    margin-right: 10px;
}
.bm-delicious {
    margin-left: 2px;
}
.bm-check {
    width: 15px;
    height: 14px;
    margin-right: 8px;
}
.bm-folder {
    width: 14px;
    height: 12px;
    margin-right: 9px;
}
.bm-fade {
    -webkit-mask-image: linear-gradient(to right, #000 85%, transparent);
    mask-image: linear-gradient(to right, #000 85%, transparent);
}
.bm-account {
    margin-right: 4px;
}
.bm-mobile {
    margin-right: -1px;
}
.bm-other {
    margin-left: auto;
}

/* page + scrollbar */
.viewport {
    flex: 1;
    min-height: 0;
    display: flex;
}
.page {
    flex: 1;
    min-width: 0;
    display: flex;
    flex-direction: column;
    overflow: hidden;
}
.scrollbar {
    width: 15px;
    flex: none;
    background-color: #f1f1f1;
    display: flex;
    flex-direction: column;
    align-items: center;
}
.scroll-up {
    margin-top: 5px;
    border: 4px solid transparent;
    border-top: 0;
    border-bottom: 5px solid #a3a3a3;
}
.scroll-thumb {
    width: 13px;
    height: 286px;
    margin-top: 5px;
    background-color: #c1c1c1;
}
.scroll-down {
    margin-top: auto;
    margin-bottom: 4px;
    border: 4px solid transparent;
    border-bottom: 0;
    border-top: 5px solid #505050;
}

/* jenkins header */
.jenkins-header {
    height: 40px;
    flex: none;
    display: flex;
    align-items: center;
    background-color: #000;
    color: #fff;
}
.logo-head {
    width: 32px;
    height: 36px;
    margin: 4px 0 0 19px;
    flex: none;
}
.logo-text {
    margin-left: 4px;
    padding-bottom: 2px;
    font-family: "Liberation Serif", serif;
    font-weight: bold;
    font-size: 32px;
    letter-spacing: 1.800px;
    -webkit-text-stroke: .3px #fff;
}
.notif {
    width: 40px;
    height: 40px;
    margin-left: auto;
    background-color: #e51616;
    font-weight: bold;
    font-size: 20px;
    line-height: 40px;
    text-align: center;
}
.search-box {
    width: 255px;
    height: 24px;
    margin: -4px 0 0 11px;
    display: flex;
    align-items: center;
    padding-left: 2px;
    background-color: #fff;
    border-radius: 3px;
    font-size: 13px;
    color: #777;
}
.search-icon {
    width: 18px;
    height: 18px;
    margin-right: 1px;
}
.search-help {
    width: 16px;
    height: 16px;
    margin: -2px 0 0 4px;
}
.user-link {
    margin-left: 26px;
    font-weight: bold;
    font-size: 13px;
}
.logout-link {
    margin: 0 21px 0 19px;
    font-weight: bold;
    font-size: 13px;
}

/* breadcrumb bar */
.breadcrumbs {
    height: 26px;
    flex: none;
    display: flex;
    align-items: center;
    padding: 0 26px 0 18px;
    background-color: #f6f8f1;
    border-bottom: 1px solid #d3d7cf;
    font-size: 13px;
    color: #555;
}
.crumb-arrow {
    width: 0;
    margin: 1px 15.500px 0 22px;
    border: 4px solid transparent;
    border-right: 0;
    border-left: 4px solid #bbb;
}
.auto-refresh {
    margin-left: auto;
    font-size: 9px;
    color: #204a87;
    text-decoration: underline;
}

/* page content */
.content {
    flex: 1;
    min-height: 0;
    display: flex;
    overflow: hidden;
}
.sidebar {
    width: 375px;
    flex: none;
    padding: 12px 0 0 15px;
}
.tasks {
    list-style: none;
    margin: 0;
    padding: 0;
}
.tasks li {
    height: 32px;
    display: flex;
    align-items: center;
    font-size: 14px;
    color: #204a87;
}
.tasks li svg {
    width: 24px;
    height: 24px;
    margin: 0 6px 0 2px;
    flex: none;
}
.tasks .visited {
    color: #5c3566;
}
.tasks .current {
    font-weight: bold;
}
.history {
    width: 330px;
    margin-top: 19px;
    border: 1px solid #eee;
    border-radius: 4px 4px 0 0;
}
.history-head {
    height: 35px;
    display: flex;
    align-items: center;
    padding: 0 0 2px 14px;
    background-color: #eee;
    font-size: 13px;
    color: #333;
}
.history-cloud {
    width: 18px;
    height: 18px;
    margin-right: 12px;
}
.history-title {
    font-weight: bold;
}
.history-trend {
    margin-left: 69px;
    font-weight: bold;
    color: #204a87;
    text-decoration: underline;
}
.history-dash {
    width: 12px;
    height: 4px;
    margin: 2px 0 0 5px;
    background-color: #7f9dc4;
    border: 1px solid #4a79b2;
}
.history-find {
    padding: 10px 10px 8px;
}
.find-input {
    height: 24px;
    display: flex;
    justify-content: space-between;
    align-items: center;
    padding: 0 5px 2px 6px;
    border: 1px solid #aaa;
    font-size: 13px;
    color: #888;
}
.find-x {
    color: #aaa;
}
.build-row {
    height: 31px;
    display: flex;
    align-items: center;
    padding: 0 0 7px 8px;
    font-size: 12px;
}
.build-row:nth-of-type(odd) {
    background-color: #fafafa;
}
.build-row a {
    width: 60px;
    font-weight: bold;
    color: #000;
    text-decoration: underline;
}
.ball {
    width: 12px;
    height: 12px;
    margin-right: 6px;
    border-radius: 50%;
    background: radial-gradient(circle at 40% 30%, #ffb0b0, #e3262a 55%, #a80f14);
}
.ball-blue {
    background: radial-gradient(circle at 40% 30%, #cfe2f5, #4a7db8 60%, #2f5a8f);
}
.build-date {
    color: #777;
}

/* main column */
.job-main {
    flex: 1;
    min-width: 0;
}
.job-main h1 {
    margin: 24px 0 0;
    font-size: 26px;
    line-height: 34px;
    color: #333;
}
.job-main h2 {
    margin: 31px 0 0;
    font-size: 19.600px;
    line-height: 26px;
    color: #333;
}
.link {
    color: #204a87;
    text-decoration: underline;
}
.summary {
    display: flex;
    margin: 90px 0 0 15px;
    font-size: 13px;
}
.summary-icon {
    width: 48px;
    height: 48px;
    flex: none;
    margin-right: 5px;
}
.artifacts {
    line-height: 20px;
    margin-top: -7px;
}
.artifact {
    display: flex;
    align-items: center;
    padding-left: 28px;
    height: 20px;
}
.artifact svg {
    width: 14px;
    height: 15px;
    margin-right: 4px;
}
.artifact-name {
    width: 161px;
}
.artifact-size {
    width: 36px;
    color: #888;
}
.summary-changes {
    align-items: center;
    margin-top: 4px;
}

/* right column with the trend charts */
.trend {
    width: 400px;
    flex: none;
    margin-right: 15px;
    padding-top: 68px;
    position: relative;
}
.add-desc {
    display: flex;
    justify-content: flex-end;
    align-items: center;
    height: 18px;
    font-size: 13px;
}
.add-desc svg {
    width: 15px;
    height: 15px;
}
.disable-btn {
    width: 171px;
    height: 32px;
    margin: 6px 2px 0 auto;
    background-color: #4d788e;
    border: 1px solid #5c8aa1;
    font-weight: bold;
    font-size: 12px;
    line-height: 30px;
    text-align: center;
    color: #e8eef2;
}
.trend h3 {
    margin: 2px 0 17px;
    height: 18px;
    padding-right: 5px;
    font-size: 15.600px;
    line-height: 18px;
    text-align: center;
    color: #333;
}
.chart {
    display: block;
    width: 400px;
    height: 200px;
    overflow: hidden;
    font-family: "DejaVu Sans", sans-serif;
}
.chart-title {
    font-weight: bold;
    font-size: 18px;
    fill: #000;
}
.chart-grid {
    fill: none;
    stroke: #8c8c8c;
    stroke-dasharray: 2 1;
}
.chart-axis {
    fill: none;
    stroke: #777;
}
.chart-tick {
    font-size: 9.500px;
    fill: #000;
}
.chart-label {
    font-size: 13px;
    fill: #000;
}
.chart-build {
    font-size: 9.500px;
    fill: #000;
}
.chart-legend {
    fill: #fff;
    stroke: #000;
}
.chart-legend-text {
    font-size: 13px;
    fill: #000;
}
.feed-badge {
    position: absolute;
    right: 5px;
    top: 663px;
    width: 24px;
    height: 24px;
}

/* desktop panel */
.taskbar {
    height: 26px;
    flex: none;
    display: flex;
    align-items: stretch;
    padding-top: 2px;
    background: linear-gradient(#4a4a4a, #303030);
    border-top: 1px solid #aaa;
    font-family: "Open Sans", sans-serif;
    font-size: 12px;
    color: #e6e6e6;
    white-space: nowrap;
}
.menu-btn {
    width: 75px;
    flex: none;
    display: flex;
    align-items: center;
    padding-left: 4px;
    font-weight: 600;
}
.menu-btn svg {
    width: 20px;
    height: 20px;
    margin-right: 7px;
}
.window {
    width: 110px;
    flex: none;
    margin-right: 4px;
    display: flex;
    align-items: center;
    padding: 0 0 2px 4px;
    background-color: #3e3e3e;
    border-radius: 2px 2px 0 0;
}
.window svg {
    width: 16px;
    height: 15px;
    margin-right: 2px;
    flex: none;
}
.window-active {
    background-color: #5d5d5d;
    margin-right: 3px;
}
.applet {
    width: 40px;
    flex: none;
    position: relative;
    background-color: #555;
    font-size: 7px;
    text-align: center;
    line-height: 9px;
}
.applet-cpu {
    margin-left: 7px;
}
.applet-cpu i {
    position: absolute;
    left: 3px;
    bottom: 3px;
    width: 34px;
    height: 2px;
    background-color: #fff;
}
.applet-mem {
    margin-left: 1px;
    background: linear-gradient(to top, #6a9fd4 60%, #555 60%);
    overflow: hidden;
}
.applet-mem b {
    position: absolute;
    left: 10px;
    top: 3px;
    width: 18px;
    height: 18px;
    border-radius: 50%;
    background-color: #fff;
}
.applet-mem span {
    position: relative;
    z-index: 1;
    color: #999;
}
.tray-stat {
    margin-left: 6px;
    padding-bottom: 2px;
    align-self: center;
    font-weight: 600;
    color: #cfe0f5;
}
.tray {
    display: flex;
    align-items: center;
    gap: 8px;
    margin-left: 8px;
}
.tray svg {
    width: 13px;
    height: 13px;
}
.tray .tray-big {
    width: 16px;
    height: 18px;
}
.clock {
    margin-left: 11px;
    padding-bottom: 2px;
    align-self: center;
    font-weight: 600;
}
```
